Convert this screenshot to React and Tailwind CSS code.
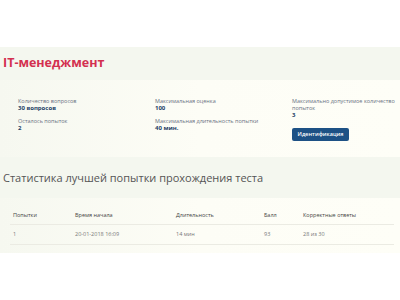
import React from "react";

const font = { fontFamily: '"Open Sans", "Noto Sans", sans-serif' };

function Field({ label, value }) {
  return (
    <div>
      <div className="text-[5.5px] leading-[7px] text-gray-500">{label}</div>
      <div className="text-[6px] leading-[7px] font-bold text-[#1e3f66]">{value}</div>
    </div>
  );
}

export default function App() {
  return (
    <div className="w-[400px] h-[300px] bg-white overflow-hidden" style={font}>
      <div className="h-[47px]" />
      <div className="h-[33px] bg-[#f4f7ef] flex items-center px-[3px]">
        <h1 className="text-[12.5px] font-bold text-[#d3304f] leading-none">IT-менеджмент</h1>
      </div>
      <div className="h-[77px] bg-gradient-to-r from-[#f6f8f0] via-[#fdfdf6] to-[#fefef7] grid grid-cols-[137px_137px_1fr] pl-[18px] pt-[18px]">
        <div className="flex flex-col gap-[6px]">
          <Field label="Количество вопросов" value="30 вопросов" />
          <Field label="Осталось попыток" value="2" />
        </div>
        <div className="flex flex-col gap-[6px]">
          <Field label="Максимальная оценка" value="100" />
          <Field label="Максимальная длительность попытки" value="40 мин." />
        </div>
        <div className="flex flex-col">
          <div className="w-[104px]">
            <div className="text-[5.5px] leading-[7px] text-gray-500">Максимально допустимое количество попыток</div>
            <div className="text-[6px] leading-[7px] font-bold text-[#1e3f66]">3</div>
          </div>
          <button className="mt-[9px] w-[57px] h-[13px] rounded-[2px] bg-[#1d5185] text-white text-[5.5px] font-semibold flex items-center justify-center">
            Идентификация
          </button>
        </div>
      </div>
      <div className="h-[41px] bg-[#f4f7ef] flex items-center px-[3px]">
        <h2 className="text-[11px] text-[#555] leading-none">Статистика лучшей попытки прохождения теста</h2>
      </div>
      <div className="h-[55px] bg-gradient-to-r from-[#f6f8f0] via-[#fdfdf6] to-[#fefef7] pl-[10px] pr-[6px] pt-[10px]">
        <div className="grid grid-cols-[62px_101px_88px_39px_1fr] text-[5.5px] leading-none">
          <div className="px-[3px] h-[17px] flex items-center font-medium text-[#444] border-b border-[#ebebe3]">Попытки</div>
          <div className="px-[3px] h-[17px] flex items-center font-medium text-[#444] border-b border-[#ebebe3]">Время начала</div>
          <div className="px-[3px] h-[17px] flex items-center font-medium text-[#444] border-b border-[#ebebe3]">Длительность</div>
          <div className="px-[3px] h-[17px] flex items-center font-medium text-[#444] border-b border-[#ebebe3]">Балл</div>
          <div className="px-[3px] h-[17px] flex items-center font-medium text-[#444] border-b border-[#ebebe3]">Корректные ответы</div>
          <div className="px-[3px] h-[20px] flex items-center text-[#777] border-b border-[#ebebe3]">1</div>
          <div className="px-[3px] h-[20px] flex items-center text-[#777] border-b border-[#ebebe3]">20-01-2018 16:09</div>
          <div className="px-[3px] h-[20px] flex items-center text-[#777] border-b border-[#ebebe3]">14 мин</div>
          <div className="px-[3px] h-[20px] flex items-center text-[#777] border-b border-[#ebebe3]">93</div>
          <div className="px-[3px] h-[20px] flex items-center text-[#777] border-b border-[#ebebe3]">28 из 30</div>
        </div>
      </div>
    </div>
  );
}
